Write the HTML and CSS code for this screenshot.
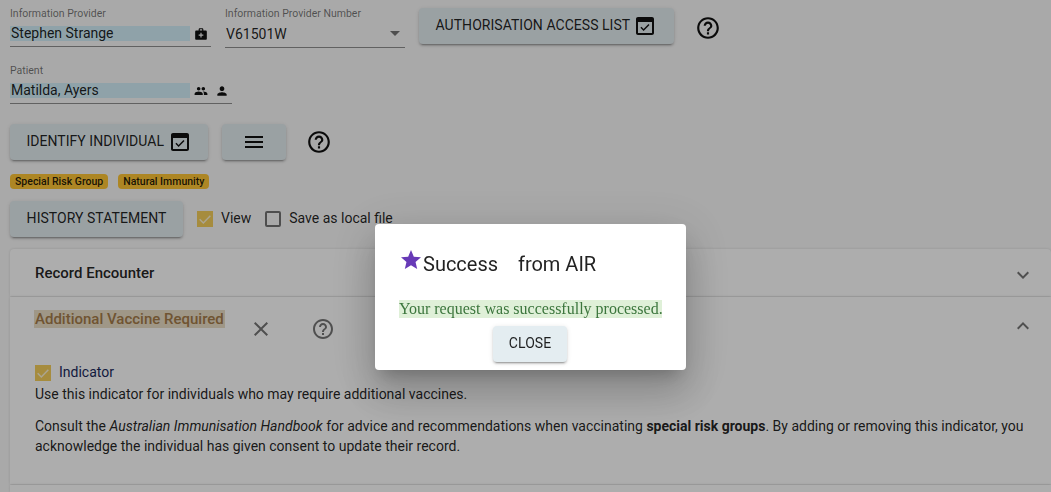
FILE: index.html
```html
<!DOCTYPE html>
<html lang="en">
<head>
  <meta charset="UTF-8" />
  <title>Additional Vaccine Required</title>
  <link rel="stylesheet" href="styles.css">
</head>
<body>

  <svg class="defs" aria-hidden="true">
    <symbol id="i-help" viewBox="0 0 24 24"><path d="M11 18h2v-2h-2v2zm1-16C6.48 2 2 6.48 2 12s4.48 10 10 10 10-4.48 10-10S17.52 2 12 2zm0 18c-4.41 0-8-3.59-8-8s3.59-8 8-8 8 3.59 8 8-3.59 8-8 8zm0-14c-2.21 0-4 1.79-4 4h2c0-1.1.9-2 2-2s2 .9 2 2c0 2-3 1.75-3 5h2c0-2.25 3-2.5 3-5 0-2.21-1.79-4-4-4z"/></symbol>
    <symbol id="i-event" viewBox="0 0 24 24"><path d="M19 3H5c-1.11 0-2 .9-2 2v14c0 1.1.89 2 2 2h14c1.1 0 2-.9 2-2V5c0-1.1-.9-2-2-2zm0 16H5V8h14v11zm-2.47-7.94L15.47 10l-4.88 4.88-2.12-2.12-1.06 1.06L10.59 17l5.94-5.94z"/></symbol>
    <symbol id="i-check" viewBox="0 0 24 24"><path d="M4 12.5l5.5 5.5L20 7" fill="none" stroke="currentColor" stroke-width="2.2"/></symbol>
  </svg>

  <main class="page">
    <div class="row row-provider">
      <div class="field field-provider">
        <label>Information Provider</label>
        <div class="field-line">
          <span class="value">Stephen Strange</span>
          <svg class="suffix" viewBox="0 0 24 24"><path d="M20 6h-4V4c0-1.1-.9-2-2-2h-4c-1.1 0-2 .9-2 2v2H4c-1.1 0-2 .9-2 2v12c0 1.1.9 2 2 2h16c1.1 0 2-.9 2-2V8c0-1.1-.9-2-2-2zM10 4h4v2h-4V4zm6 11h-3v3h-2v-3H8v-2h3v-3h2v3h3v2z"/></svg>
        </div>
      </div>
      <div class="field field-number">
        <label>Information Provider Number</label>
        <div class="field-line">
          <span class="plain">V61501W</span>
          <span class="arrow"></span>
        </div>
      </div>
      <button class="btn btn-access">AUTHORISATION ACCESS LIST <svg class="btn-icon"><use href="#i-event"/></svg></button>
      <svg class="help help-access"><use href="#i-help"/></svg>
    </div>

    <div class="field field-patient">
      <label>Patient</label>
      <div class="field-line">
        <span class="value">Matilda, Ayers</span>
        <svg class="suffix" viewBox="0 0 24 24"><path d="M16 11c1.66 0 2.99-1.34 2.99-3S17.66 5 16 5c-1.66 0-3 1.34-3 3s1.34 3 3 3zm-8 0c1.66 0 2.99-1.34 2.99-3S9.66 5 8 5C6.34 5 5 6.34 5 8s1.34 3 3 3zm0 2c-2.33 0-7 1.17-7 3.5V19h14v-2.5c0-2.33-4.67-3.5-7-3.5zm8 0c-.29 0-.62.02-.97.05 1.16.84 1.97 1.97 1.97 3.45V19h6v-2.5c0-2.33-4.67-3.5-7-3.5z"/></svg>
        <svg class="suffix suffix-person" viewBox="0 0 24 24"><path d="M12 12c2.21 0 4-1.79 4-4s-1.79-4-4-4-4 1.79-4 4 1.79 4 4 4zm0 2c-2.67 0-8 1.34-8 4v2h16v-2c0-2.66-5.33-4-8-4z"/></svg>
      </div>
    </div>

    <div class="row row-identify">
      <button class="btn btn-identify">IDENTIFY INDIVIDUAL <svg class="btn-icon"><use href="#i-event"/></svg></button>
      <button class="btn btn-menu">
        <svg class="menu-icon" viewBox="0 0 24 24"><path d="M3 18h18v-2H3v2zm0-5h18v-2H3v2zm0-7v2h18V6H3z"/></svg>
      </button>
      <svg class="help help-identify"><use href="#i-help"/></svg>
    </div>

    <div class="chips">
      <span class="chip">Special Risk Group</span>
      <span class="chip">Natural Immunity</span>
    </div>

    <div class="row row-history">
      <button class="btn btn-history">HISTORY STATEMENT</button>
      <span class="check check-on"><svg><use href="#i-check"/></svg></span>
      <span class="check-label">View</span>
      <span class="check check-off"></span>
      <span class="check-label">Save as local file</span>
    </div>

    <section class="accordion">
      <div class="panel panel-record">
        <h3>Record Encounter</h3>
        <svg class="chevron" viewBox="0 0 24 24"><path d="M16.59 8.59L12 13.17 7.41 8.59 6 10l6 6 6-6z"/></svg>
      </div>

      <div class="panel panel-vaccine">
        <div class="vaccine-head">
          <h3 class="warn-title">Additional Vaccine Required</h3>
          <svg class="close-icon" viewBox="0 0 24 24"><path d="M19 6.41L17.59 5 12 10.59 6.41 5 5 6.41 10.59 12 5 17.59 6.41 19 12 13.41 17.59 19 19 17.59 13.41 12z"/></svg>
          <svg class="help help-vaccine"><use href="#i-help"/></svg>
          <svg class="chevron chevron-up" viewBox="0 0 24 24"><path d="M12 8l-6 6 1.41 1.41L12 10.83l4.59 4.58L18 14z"/></svg>
        </div>
        <div class="indicator">
          <span class="check check-on"><svg><use href="#i-check"/></svg></span>
          <span class="check-label">Indicator</span>
        </div>
        <p class="note">Use this indicator for individuals who may require additional vaccines.</p>
        <p class="consult">Consult the <em>Australian Immunisation Handbook</em> for advice and recommendations when vaccinating <strong>special risk groups</strong>. By adding or removing this indicator, you acknowledge the individual has given consent to update their record.</p>
      </div>

      <div class="panel panel-next"></div>
    </section>
  </main>

  <div class="backdrop"></div>

  <div class="dialog">
    <h2>
      <svg class="star" viewBox="0 0 24 24"><path d="M12 17.27L18.18 21l-1.64-7.03L22 9.24l-7.19-.61L12 2 9.19 8.63 2 9.24l5.46 4.73L5.82 21z"/></svg>
      <span class="dialog-title">Success&nbsp;&nbsp;&nbsp; from AIR</span>
    </h2>
    <p class="alert">Your request was successfully processed.</p>
    <button class="btn btn-close">CLOSE</button>
  </div>

</body>
</html>
```

FILE: styles.css
```css
:root {
  --bg-color: #fafafa;
  --text-color: rgba(0, 0, 0, 0.87);
  --btn-bg: #e4edf1;
  --value-bg: #d3effa;
  --amber: #ffc636;
  --line: #8f8f8f;
}

* {
  box-sizing: border-box;
}

html, body {
  height: 100%;
}

body {
  margin: 0;
  overflow: hidden;
  background: var(--bg-color);
  color: var(--text-color);
  font-family: Roboto, "Liberation Sans", sans-serif;
  font-size: 14px;
  line-height: 20px;
}

.defs {
  display: none;
}

.page {
  padding: 8px 0 0 10px;
}

.row {
  display: flex;
  align-items: flex-start;
}

/* form fields */

.field label {
  display: block;
  height: 11px;
  font-size: 10.5px;
  line-height: 11px;
  color: rgba(0, 0, 0, 0.54);
}

.field-line {
  display: flex;
  align-items: center;
  height: 28px;
  border-bottom: 1px solid var(--line);
  padding-top: 2px;
}

.field-provider {
  width: 201px;
}

.field-number {
  width: 180px;
  margin-left: 14px;
}

.field-number .field-line {
  height: 29px;
  padding-bottom: 1px;
}

.field-patient {
  width: 222px;
  margin-top: 17px;
}

.value {
  width: 180px;
  height: 15px;
  padding-left: 1px;
  line-height: 15px;
  background: var(--value-bg);
}

.plain {
  flex: 1;
  padding-left: 1px;
}

.suffix {
  width: 14px;
  height: 14px;
  margin-left: 4px;
  fill: #111;
}

.field-patient .suffix {
  margin-left: 4px;
}

.field-patient .suffix-person {
  margin-left: 7px;
}

.arrow {
  width: 0;
  height: 0;
  margin-right: 5px;
  border-left: 5px solid transparent;
  border-right: 5px solid transparent;
  border-top: 5px solid rgba(0, 0, 0, 0.54);
}

/* buttons */

.btn {
  display: inline-flex;
  align-items: center;
  justify-content: center;
  height: 36px;
  padding: 0 0 2px;
  border: 0;
  border-radius: 4px;
  background: var(--btn-bg);
  color: var(--text-color);
  font-family: inherit;
  font-size: 14px;
  font-weight: 400;
  letter-spacing: 0.04px;
  white-space: pre;
  box-shadow: 0 3px 1px -2px rgba(0, 0, 0, 0.2), 0 2px 2px 0 rgba(0, 0, 0, 0.14), 0 1px 5px 0 rgba(0, 0, 0, 0.12);
}

.btn-icon {
  flex: none;
  width: 24px;
  height: 24px;
  margin-top: 2px;
  fill: #111;
}

.btn-access {
  width: 255px;
  margin-left: 14px;
}

.btn-identify {
  width: 198px;
}

.btn-menu {
  width: 64px;
  margin-left: 14px;
  padding: 0;
}

.menu-icon {
  width: 24px;
  height: 24px;
  fill: #111;
}

.btn-history {
  width: 173px;
}

.help {
  width: 26px;
  height: 26px;
  fill: #111;
}

.help-access {
  margin: 7px 0 0 21px;
}

.row-identify {
  margin-top: 20px;
}

.help-identify {
  margin: 5px 0 0 20px;
}

/* chips */

.chips {
  display: flex;
  gap: 10px;
  margin-top: 14px;
}

.chip {
  height: 15px;
  padding: 0 5px;
  border-radius: 4px;
  background: var(--amber);
  font-size: 10.5px;
  font-weight: 500;
  line-height: 15px;
}

/* checkboxes */

.row-history {
  align-items: center;
  margin-top: 12px;
}

.check {
  display: block;
  flex: none;
  width: 16px;
  height: 16px;
  color: rgba(255, 255, 255, 0.75);
}

.check svg {
  display: block;
  width: 16px;
  height: 16px;
}

.check-on {
  background: #f5cf5c;
}

.check-off {
  border: 2px solid rgba(0, 0, 0, 0.54);
  border-radius: 2px;
}

.check-label {
  margin-left: 8px;
  padding-bottom: 2px;
  line-height: 18px;
}

.row-history .check-on {
  margin-left: 14px;
}

.row-history .check-off {
  margin-left: 14px;
}

/* accordion */

.accordion {
  margin-top: 12px;
}

.panel {
  position: relative;
  background: #fff;
  border-radius: 4px 4px 0 0;
  box-shadow: 0 0 3px rgba(0, 0, 0, 0.14);
}

.panel h3 {
  margin: 0;
  font-size: 15px;
  font-weight: 500;
  line-height: 20px;
}

.panel-record {
  display: flex;
  align-items: center;
  justify-content: space-between;
  height: 47px;
  padding: 0 16px 0 25px;
}

.chevron {
  width: 24px;
  height: 24px;
  margin-top: 4px;
  fill: rgba(0, 0, 0, 0.54);
}

.panel-vaccine {
  height: 187px;
  margin-top: 1px;
  padding: 0 16px 0 25px;
  border-radius: 0;
}

.vaccine-head {
  display: flex;
  align-items: flex-start;
  height: 66px;
  padding-top: 13px;
}

.panel .warn-title {
  height: 18px;
  margin-left: -1px;
  padding: 0 1px;
  line-height: 18px;
  background: #eadfc8;
  color: #a57c4a;
}

.close-icon {
  width: 24px;
  height: 24px;
  margin: 7px 0 0 24px;
  fill: rgba(0, 0, 0, 0.54);
}

.help-vaccine {
  width: 24px;
  height: 24px;
  margin: 7px 0 0 38px;
  fill: rgba(0, 0, 0, 0.54);
}

.chevron-up {
  margin-left: auto;
  margin-top: 4px;
}

.indicator {
  display: flex;
  align-items: center;
}

.indicator .check-label {
  color: #1a2a5c;
}

.panel p {
  margin: 0;
}

.panel .note {
  margin-top: 1px;
}

.panel .consult {
  margin-top: 12px;
}

.panel-next {
  height: 7px;
  margin-top: 1px;
  border-radius: 0;
}

/* dialog */

.backdrop {
  position: fixed;
  inset: 0;
  background: rgba(0, 0, 0, 0.32);
}

.dialog {
  position: fixed;
  left: 375px;
  top: 224px;
  width: 311px;
  height: 146px;
  padding: 24px;
  border-radius: 4px;
  background: #fff;
  text-align: center;
  box-shadow: 0 11px 15px -7px rgba(0, 0, 0, 0.2), 0 24px 38px 3px rgba(0, 0, 0, 0.14), 0 9px 46px 8px rgba(0, 0, 0, 0.12);
}

.dialog h2 {
  display: flex;
  align-items: flex-start;
  height: 32px;
  margin: 0;
  font-size: 20px;
  font-weight: 400;
  line-height: 32px;
  text-align: left;
}

.star {
  flex: none;
  width: 24px;
  height: 24px;
  fill: #673ab7;
}

.dialog-title {
  white-space: pre;
}

.alert {
  width: 263px;
  height: 18px;
  margin: 20px 0 8px;
  background: #dff0d8;
  color: #3c763d;
  font-family: "Liberation Serif", serif;
  font-size: 16px;
  line-height: 18px;
  white-space: nowrap;
}

.btn-close {
  width: 74px;
  margin-left: -1px;
}
```
